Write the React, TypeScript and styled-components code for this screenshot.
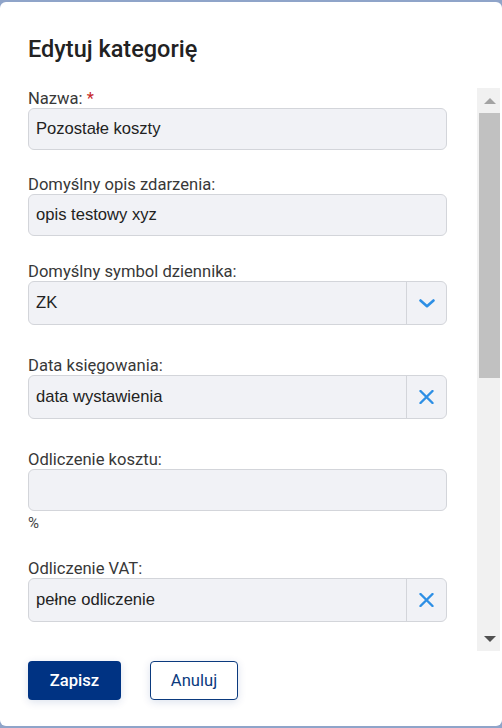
import styled, { createGlobalStyle } from "styled-components";

const GlobalStyle = createGlobalStyle`
  html, body {
    margin: 0;
    padding: 0;
    background: #8fa4c9;
  }
  * {
    box-sizing: border-box;
  }
`;

const ChevronIcon = () => (
  <svg width="16" height="9" viewBox="0 0 16 9" fill="none">
    <polyline
      points="1.5,1.5 8,7.2 14.5,1.5"
      stroke="#2d8fe5"
      strokeWidth="2.6"
      strokeLinecap="round"
      strokeLinejoin="round"
    />
  </svg>
);

const ClearIcon = () => (
  <svg width="15" height="14" viewBox="0 0 15 14" fill="none">
    <path
      d="M1.5 1 L13.5 13 M13.5 1 L1.5 13"
      stroke="#2d8fe5"
      strokeWidth="2.4"
      strokeLinecap="round"
    />
  </svg>
);

type FieldDef = {
  label: string;
  value: string;
  kind: "text" | "select" | "clear";
  required?: boolean;
  suffix?: string;
  spacing: number;
};

const fields: FieldDef[] = [
  { label: "Nazwa:", value: "Pozostałe koszty", kind: "text", required: true, spacing: 25 },
  { label: "Domyślny opis zdarzenia:", value: "opis testowy xyz", kind: "text", spacing: 26 },
  { label: "Domyślny symbol dziennika:", value: "ZK", kind: "select", spacing: 31 },
  { label: "Data księgowania:", value: "data wystawienia", kind: "clear", spacing: 31 },
  { label: "Odliczenie kosztu:", value: "", kind: "text", suffix: "%", spacing: 27 },
  { label: "Odliczenie VAT:", value: "pełne odliczenie", kind: "clear", spacing: 30 },
];

export default function App() {
  return (
    <>
      <GlobalStyle />
      <Dialog>
        <Title>Edytuj kategorię</Title>
        <ScrollRow>
          <FormColumn>
            {fields.map((f) => (
              <Field key={f.label} $spacing={f.spacing}>
                <Label>
                  {f.label}
                  {f.required && <Required>*</Required>}
                </Label>
                {f.kind === "text" ? (
                  <TextInput>{f.value}</TextInput>
                ) : (
                  <SelectBox>
                    <SelectValue>{f.value}</SelectValue>
                    <SelectButton>
                      {f.kind === "select" ? <ChevronIcon /> : <ClearIcon />}
                    </SelectButton>
                  </SelectBox>
                )}
                {f.suffix && <Suffix>{f.suffix}</Suffix>}
              </Field>
            ))}
          </FormColumn>
          <Scrollbar>
            <ScrollArrow>
              <ArrowUp />
            </ScrollArrow>
            <ScrollThumb />
            <ScrollSpacer />
            <ScrollArrow>
              <ArrowDown />
            </ScrollArrow>
          </Scrollbar>
        </ScrollRow>
        <Footer>
          <PrimaryButton>Zapisz</PrimaryButton>
          <SecondaryButton>Anuluj</SecondaryButton>
        </Footer>
      </Dialog>
    </>
  );
}

const Dialog = styled.div`
  margin-top: 2px;
  width: 502px;
  height: 724px;
  background: #ffffff;
  border-radius: 6px;
  display: flex;
  flex-direction: column;
  padding-top: 34px;
  overflow: hidden;
`;

const Title = styled.h2`
  margin: 0 0 25px 28px;
  font-family: Roboto, "Noto Sans", sans-serif;
  font-size: 23.5px;
  line-height: 27px;
  font-weight: 500;
  color: #222222;
`;

const ScrollRow = styled.div`
  display: flex;
  height: 563px;
`;

const FormColumn = styled.div`
  flex: 1;
  overflow: hidden;
  padding: 1px 30px 0 28px;
`;

const Field = styled.div<{ $spacing: number }>`
  display: flex;
  flex-direction: column;
  margin-bottom: ${(p) => p.$spacing}px;
`;

const Label = styled.label`
  font-family: Roboto, "Noto Sans", sans-serif;
  font-size: 16.6px;
  line-height: 19px;
  color: #383838;
`;

const Required = styled.span`
  color: #c62828;
  margin-left: 4px;
`;

const controlBase = `
  background: #f1f2f6;
  border: 1px solid #d3d5da;
  border-radius: 6px;
  font-family: "Liberation Sans", Arial, sans-serif;
  font-size: 16.6px;
  color: #222222;
`;

const TextInput = styled.div`
  ${controlBase}
  height: 42px;
  padding: 0 7px;
  display: flex;
  align-items: center;
`;

const SelectBox = styled.div`
  ${controlBase}
  height: 44px;
  display: flex;
  align-items: stretch;
`;

const SelectValue = styled.div`
  flex: 1;
  display: flex;
  align-items: center;
  padding: 0 7px;
`;

const SelectButton = styled.div`
  width: 40px;
  border-left: 1px solid #d3d5da;
  display: flex;
  align-items: center;
  justify-content: center;
`;

const Suffix = styled.div`
  font-family: Roboto, "Noto Sans", sans-serif;
  font-size: 15px;
  line-height: 18px;
  color: #444444;
  padding-top: 3px;
`;

const Scrollbar = styled.div`
  width: 23px;
  margin-right: 2px;
  background: #f1f1f1;
  display: flex;
  flex-direction: column;
`;

const ScrollArrow = styled.div`
  height: 25px;
  display: flex;
  align-items: center;
  justify-content: center;
`;

const ArrowUp = styled.div`
  width: 0;
  height: 0;
  border-left: 6px solid transparent;
  border-right: 6px solid transparent;
  border-bottom: 6px solid #a3a3a3;
  margin-left: 2px;
`;

const ArrowDown = styled.div`
  width: 0;
  height: 0;
  border-left: 6px solid transparent;
  border-right: 6px solid transparent;
  border-top: 6px solid #505050;
  margin-left: 2px;
`;

const ScrollThumb = styled.div`
  height: 265px;
  margin-left: 2px;
  background: #c1c1c1;
`;

const ScrollSpacer = styled.div`
  flex: 1;
`;

const Footer = styled.div`
  display: flex;
  gap: 29px;
  padding: 10px 0 0 28px;
`;

const buttonBase = `
  height: 39px;
  border-radius: 4px;
  font-family: Roboto, "Noto Sans", sans-serif;
  font-size: 16.6px;
  font-weight: 500;
  display: flex;
  align-items: center;
  justify-content: center;
  box-shadow: 0 2px 8px rgba(0, 51, 131, 0.14);
`;

const PrimaryButton = styled.button`
  ${buttonBase}
  width: 93px;
  background: #003383;
  color: #ffffff;
  border: none;
`;

const SecondaryButton = styled.button`
  ${buttonBase}
  width: 88px;
  background: #ffffff;
  color: #0b3a7e;
  font-weight: 400;
  border: 1px solid #0b3a7e;
`;
